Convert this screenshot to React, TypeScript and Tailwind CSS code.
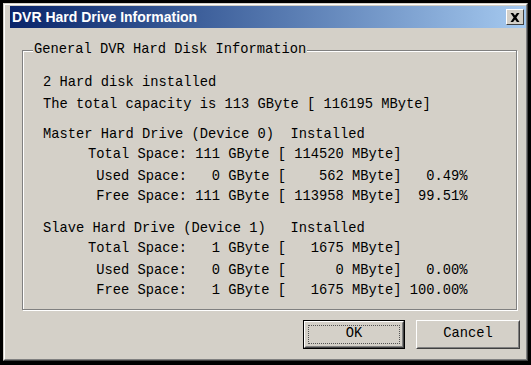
import React from 'react';

const mono = { fontFamily: '"Liberation Mono", "Courier New", monospace' };

interface Row {
  label: string;
  value: string;
}

interface Drive {
  title: string;
  rows: Row[];
}

const drives: Drive[] = [
  {
    title: 'Master Hard Drive (Device 0)  Installed',
    rows: [
      { label: 'Total Space:', value: ' 111 GByte [ 114520 MByte]' },
      { label: 'Used Space:', value: '   0 GByte [    562 MByte]   0.49%' },
      { label: 'Free Space:', value: ' 111 GByte [ 113958 MByte]  99.51%' },
    ],
  },
  {
    title: 'Slave Hard Drive (Device 1)   Installed',
    rows: [
      { label: 'Total Space:', value: '   1 GByte [   1675 MByte]' },
      { label: 'Used Space:', value: '   0 GByte [      0 MByte]   0.00%' },
      { label: 'Free Space:', value: '   1 GByte [   1675 MByte] 100.00%' },
    ],
  },
];

function DriveBlock({ drive }: { drive: Drive }) {
  return (
    <div>
      <div className="h-[20px] leading-[20px] whitespace-pre">{drive.title}</div>
      {drive.rows.map((row, i) => (
        <div
          key={row.label}
          className={`grid grid-cols-[144px_1fr] h-[20px] leading-[20px] ${i === 1 ? 'mt-[2px]' : ''}`}
        >
          <span className="text-right whitespace-pre">{row.label}</span>
          <span className="whitespace-pre">{row.value}</span>
        </div>
      ))}
    </div>
  );
}

export default function App() {
  return (
    <div className="w-[531px] h-[365px] bg-black pt-[3px] pl-[3px] pr-[3px] pb-[4px]">
      {/* window frame */}
      <div className="h-full border border-t-[#d4d0c8] border-l-[#d4d0c8] border-r-[#404040] border-b-[#404040]">
        <div className="h-full border border-t-white border-l-white border-r-[#808080] border-b-[#808080] bg-[#d4d0c8] pl-[5px] pt-[1px] flex flex-col">
          {/* Title bar */}
          <div className="h-[22px] flex items-center justify-between pl-[2px] pr-[2px] bg-gradient-to-r from-[#0a246a] to-[#a6caf0]">
            <span
              className="text-white font-bold text-[14px]"
              style={{ fontFamily: 'Tahoma, "Liberation Sans", Arial, sans-serif' }}
            >
              DVR Hard Drive Information
            </span>
            <div className="w-[18px] h-[16px] bg-[#d4d0c8] border border-t-white border-l-white border-r-[#404040] border-b-[#404040] flex items-center justify-center">
              <svg width="10" height="9" viewBox="0 0 10 9">
                <path d="M0.5 0h2.6l1.9 2.6L6.9 0h2.6L6.4 4.5 9.5 9H6.9L5 6.4 3.1 9H0.5l3.1-4.5z" fill="#000" />
              </svg>
            </div>
          </div>

          {/* Body */}
          <div className="flex-1 flex flex-col text-[13.75px] text-black" style={mono}>
            <fieldset className="mt-[14px] ml-[12px] mr-[9px] border border-[#808080] shadow-[inset_1px_1px_0_white,1px_1px_0_white] p-0">
              <legend className="ml-[10px] px-[1px] leading-[16px] bg-[#d4d0c8] whitespace-pre">
                General DVR Hard Disk Information
              </legend>
              <div className="pl-[20px] pt-[15px] pb-[8px]">
                <div className="h-[20px] leading-[20px]">2 Hard disk installed</div>
                <div className="h-[20px] leading-[20px] mt-[2px]">The total capacity is 113 GByte [ 116195 MByte]</div>
                <div className="mt-[10px]">
                  <DriveBlock drive={drives[0]} />
                </div>
                <div className="mt-[12px]">
                  <DriveBlock drive={drives[1]} />
                </div>
              </div>
            </fieldset>

            {/* Buttons */}
            <div className="flex justify-end gap-[11px] mt-[10px] pr-[6px]">
              <button className="w-[102px] h-[29px] border border-black">
                <div className="h-full border border-t-white border-l-white border-r-[#404040] border-b-[#404040]">
                  <div className="h-full border border-t-[#d4d0c8] border-l-[#d4d0c8] border-r-[#808080] border-b-[#808080] p-[2px]">
                    <div className="h-full border border-dotted border-[#555] flex items-center justify-center">
                      OK
                    </div>
                  </div>
                </div>
              </button>
              <button className="w-[104px] h-[29px] border border-t-white border-l-white border-r-[#404040] border-b-[#404040]">
                <div className="h-full border border-t-[#d4d0c8] border-l-[#d4d0c8] border-r-[#808080] border-b-[#808080] flex items-center justify-center">
                  Cancel
                </div>
              </button>
            </div>
          </div>
        </div>
      </div>
    </div>
  );
}
